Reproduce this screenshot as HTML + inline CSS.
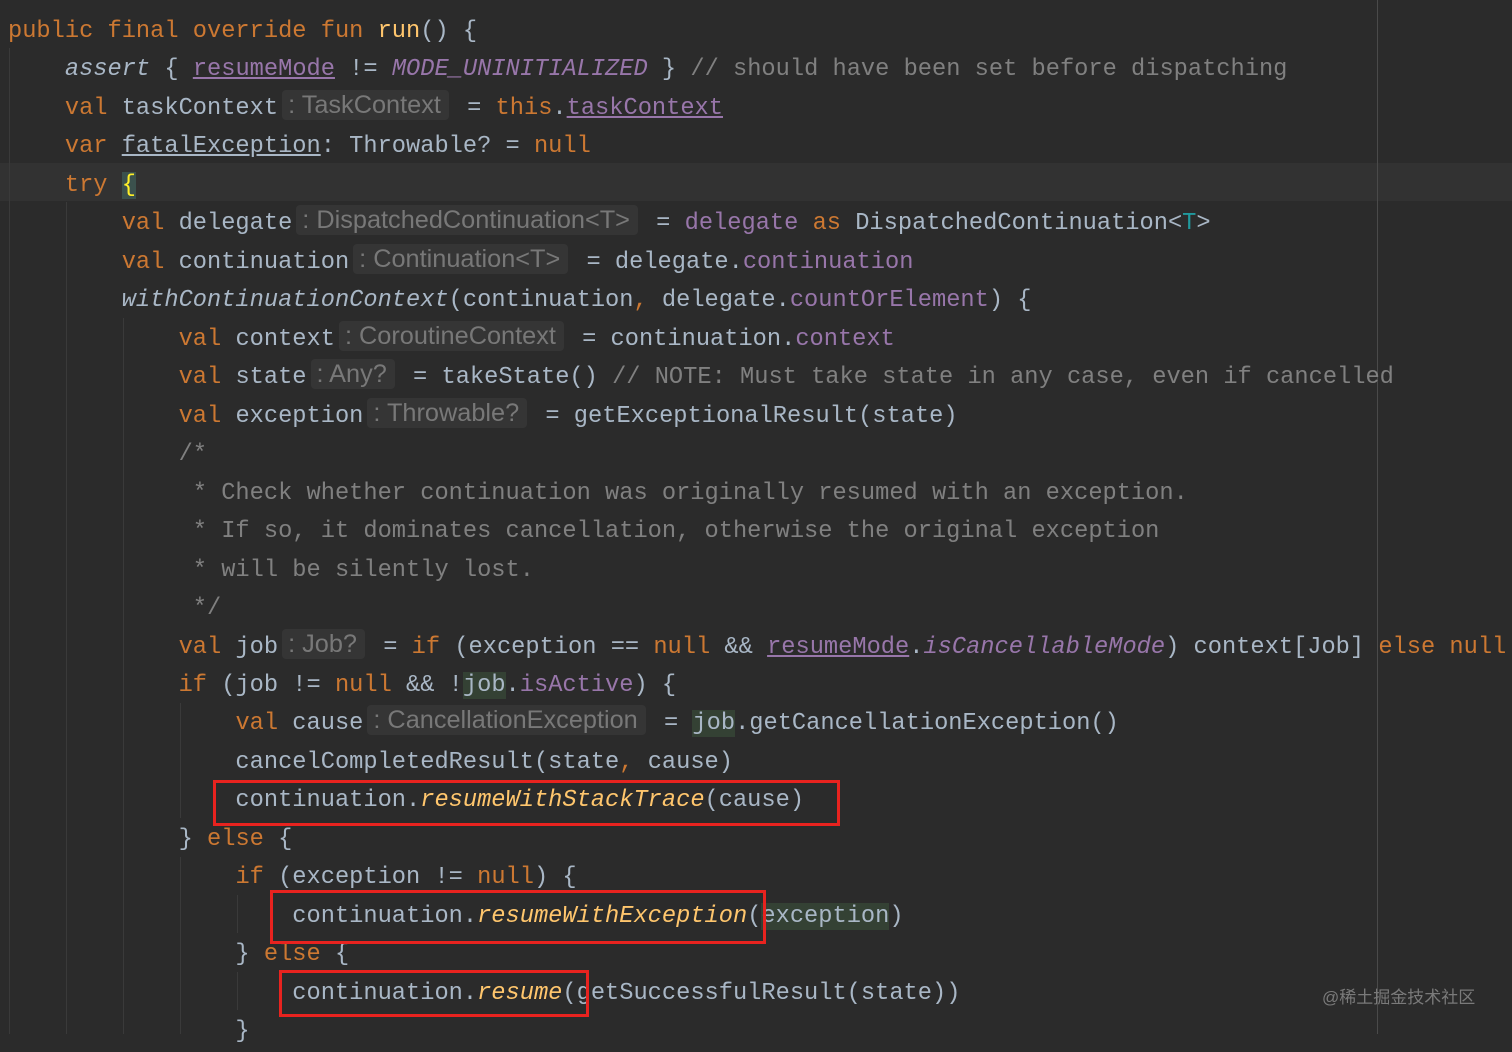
<!DOCTYPE html>
<html><head><meta charset="utf-8"><style>
html,body{margin:0;padding:0;background:#2b2b2b;width:1512px;height:1034px;overflow:hidden}
#ed{position:absolute;left:8px;top:13px;font-family:"Liberation Mono",monospace;font-size:23.7px;color:#a9b7c6}
.l{height:38.48px;line-height:38.48px;white-space:pre}
.k{color:#cc7832}.p{color:#9876aa}.f{color:#ffc66d}.c{color:#808080}.i{font-style:italic}.u{text-decoration:underline}.t{color:#20999d}
.h{display:inline-block;height:30px;font-family:"Liberation Sans",sans-serif;font-size:25.3px;color:#787878;background:#353535;border-radius:4px;line-height:30px;padding:0 8px 0 6px;margin:0 4px;vertical-align:top;margin-top:0px}
.g{background:#344134}
.cur{position:absolute;left:0;top:163px;width:1512px;height:38px;background:#323232}
.rb{position:absolute;border:3px solid #e8231f;box-sizing:border-box}
.guide{position:absolute;width:1px;background:#3a3a3a}
</style></head><body>
<div class="cur"></div>
<div style="position:absolute;left:1377px;top:0;width:1px;height:1034px;background:#4a4a4a"></div>
<div class="guide" style="left:9px;top:48px;height:986px"></div>
<div class="guide" style="left:66px;top:202px;height:832px"></div>
<div class="guide" style="left:123px;top:318px;height:716px"></div>
<div class="guide" style="left:180px;top:703px;height:115px"></div>
<div class="guide" style="left:180px;top:857px;height:177px"></div>
<div class="guide" style="left:237px;top:895px;height:38px"></div>
<div class="guide" style="left:237px;top:972px;height:38px"></div>
<div id="ed">
<div class="l"><span class="k">public final override fun </span><span class="f">run</span>() {</div>
<div class="l">    <span class="i">assert</span> { <span class="p u">resumeMode</span> != <span class="p i">MODE_UNINITIALIZED</span> } <span class="c">// should have been set before dispatching</span></div>
<div class="l">    <span class="k">val </span>taskContext<span class="h">: TaskContext</span> = <span class="k">this</span>.<span class="p u">taskContext</span></div>
<div class="l">    <span class="k">var </span><span class="u">fatalException</span>: Throwable? = <span class="k">null</span></div>
<div class="l">    <span class="k">try </span><span style="color:#ffef28;background:#3b514d">{</span></div>
<div class="l">        <span class="k">val </span>delegate<span class="h">: DispatchedContinuation&lt;T&gt;</span> = <span class="p">delegate</span> <span class="k">as </span>DispatchedContinuation&lt;<span class="t">T</span>&gt;</div>
<div class="l">        <span class="k">val </span>continuation<span class="h">: Continuation&lt;T&gt;</span> = delegate.<span class="p">continuation</span></div>
<div class="l">        <span class="i">withContinuationContext</span>(continuation<span class="k">, </span>delegate.<span class="p">countOrElement</span>) {</div>
<div class="l">            <span class="k">val </span>context<span class="h">: CoroutineContext</span> = continuation.<span class="p">context</span></div>
<div class="l">            <span class="k">val </span>state<span class="h">: Any?</span> = takeState() <span class="c">// NOTE: Must take state in any case, even if cancelled</span></div>
<div class="l">            <span class="k">val </span>exception<span class="h">: Throwable?</span> = getExceptionalResult(state)</div>
<div class="l c">            /*</div>
<div class="l c">             * Check whether continuation was originally resumed with an exception.</div>
<div class="l c">             * If so, it dominates cancellation, otherwise the original exception</div>
<div class="l c">             * will be silently lost.</div>
<div class="l c">             */</div>
<div class="l">            <span class="k">val </span>job<span class="h">: Job?</span> = <span class="k">if </span>(exception == <span class="k">null </span>&amp;&amp; <span class="p u">resumeMode</span>.<span class="p i">isCancellableMode</span>) context[Job] <span class="k">else null</span></div>
<div class="l">            <span class="k">if </span>(job != <span class="k">null </span>&amp;&amp; !<span class="g">job</span>.<span class="p">isActive</span>) {</div>
<div class="l">                <span class="k">val </span>cause<span class="h">: CancellationException</span> = <span class="g">job</span>.getCancellationException()</div>
<div class="l">                cancelCompletedResult(state<span class="k">, </span>cause)</div>
<div class="l">                continuation.<span class="f i">resumeWithStackTrace</span>(cause)</div>
<div class="l">            } <span class="k">else </span>{</div>
<div class="l">                <span class="k">if </span>(exception != <span class="k">null</span>) {</div>
<div class="l">                    continuation.<span class="f i">resumeWithException</span>(<span class="g">exception</span>)</div>
<div class="l">                } <span class="k">else </span>{</div>
<div class="l">                    continuation.<span class="f i">resume</span>(getSuccessfulResult(state))</div>
<div class="l">                }</div>
</div>
<div class="rb" style="left:213px;top:780px;width:627px;height:46px"></div>
<div class="rb" style="left:270px;top:890px;width:496px;height:54px"></div>
<div class="rb" style="left:279px;top:970px;width:310px;height:47px"></div>
<div style="position:absolute;left:1322px;top:983px;font-family:'Liberation Sans','Noto Sans CJK SC',sans-serif;font-size:17px;color:#7a7a7a">@稀土掘金技术社区</div>
</body></html>
